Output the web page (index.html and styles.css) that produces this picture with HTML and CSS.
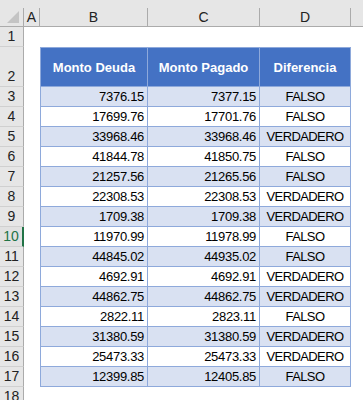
FILE: index.html
```html
<!DOCTYPE html>
<html>
<head>
<meta charset="utf-8">
<link rel="stylesheet" href="styles.css">
</head>
<body>
<div class="sheet">
  <div class="row colheads">
    <div class="ch corner"><span class="tri"></span></div>
    <div class="ch">A</div>
    <div class="ch">B</div>
    <div class="ch">C</div>
    <div class="ch">D</div>
    <div class="ch last"></div>
  </div>
  <div class="row r1"><div class="rh">1</div><div></div><div></div><div></div><div></div><div></div></div>
  <div class="row r2"><div class="rh">2</div><div></div><div class="th first">Monto Deuda</div><div class="th">Monto Pagado</div><div class="th">Diferencia</div><div></div></div>
  <div class="row band"><div class="rh">3</div><div></div><div class="td num first">7376.15</div><div class="td num">7377.15</div><div class="td txt">FALSO</div><div></div></div>
  <div class="row"><div class="rh">4</div><div></div><div class="td num first">17699.76</div><div class="td num">17701.76</div><div class="td txt">FALSO</div><div></div></div>
  <div class="row band"><div class="rh">5</div><div></div><div class="td num first">33968.46</div><div class="td num">33968.46</div><div class="td txt">VERDADERO</div><div></div></div>
  <div class="row"><div class="rh">6</div><div></div><div class="td num first">41844.78</div><div class="td num">41850.75</div><div class="td txt">FALSO</div><div></div></div>
  <div class="row band"><div class="rh">7</div><div></div><div class="td num first">21257.56</div><div class="td num">21265.56</div><div class="td txt">FALSO</div><div></div></div>
  <div class="row"><div class="rh">8</div><div></div><div class="td num first">22308.53</div><div class="td num">22308.53</div><div class="td txt">VERDADERO</div><div></div></div>
  <div class="row band"><div class="rh">9</div><div></div><div class="td num first">1709.38</div><div class="td num">1709.38</div><div class="td txt">VERDADERO</div><div></div></div>
  <div class="row"><div class="rh active">10</div><div></div><div class="td num first">11970.99</div><div class="td num">11978.99</div><div class="td txt">FALSO</div><div></div></div>
  <div class="row band"><div class="rh">11</div><div></div><div class="td num first">44845.02</div><div class="td num">44935.02</div><div class="td txt">FALSO</div><div></div></div>
  <div class="row"><div class="rh">12</div><div></div><div class="td num first">4692.91</div><div class="td num">4692.91</div><div class="td txt">VERDADERO</div><div></div></div>
  <div class="row band"><div class="rh">13</div><div></div><div class="td num first">44862.75</div><div class="td num">44862.75</div><div class="td txt">VERDADERO</div><div></div></div>
  <div class="row"><div class="rh">14</div><div></div><div class="td num first">2822.11</div><div class="td num">2823.11</div><div class="td txt">FALSO</div><div></div></div>
  <div class="row band"><div class="rh">15</div><div></div><div class="td num first">31380.59</div><div class="td num">31380.59</div><div class="td txt">VERDADERO</div><div></div></div>
  <div class="row"><div class="rh">16</div><div></div><div class="td num first">25473.33</div><div class="td num">25473.33</div><div class="td txt">VERDADERO</div><div></div></div>
  <div class="row band"><div class="rh">17</div><div></div><div class="td num first">12399.85</div><div class="td num">12405.85</div><div class="td txt">FALSO</div><div></div></div>
  <div class="row"><div class="rh">18</div><div></div><div></div><div></div><div></div><div></div></div>
</div>
</body>
</html>
```
FILE: styles.css
```css
html, body {
  margin: 0;
  padding: 0;
  background: #ffffff;
  overflow: hidden;
}
.sheet {
  width: 363px;
  height: 400px;
  overflow: hidden;
  font-family: "Liberation Sans", Arial, sans-serif;
  font-size: 13px;
  color: #000;
}
.row {
  display: grid;
  grid-template-columns: 24px 16px 108px 112px 91px 1fr;
  height: 20px;
}
.row > div {
  box-sizing: border-box;
  min-width: 0;
}
.colheads {
  height: 27px;
  background: #e6e6e6;
  padding-top: 8px;
  box-sizing: border-box;
  border-bottom: 1px solid #ababab;
}
.ch {
  border-right: 1px solid #ababab;
  display: flex;
  align-items: center;
  justify-content: center;
  color: #222;
  font-size: 14px;
  line-height: 18px;
}
.ch.last { border-right: none; }
.corner {
  position: relative;
}
.tri {
  position: absolute;
  right: 4px;
  bottom: 3px;
  width: 0;
  height: 0;
  border-left: 12px solid transparent;
  border-bottom: 12px solid #c4c4c4;
}
.r2 { height: 40px; }
.rh {
  background: #e6e6e6;
  border-right: 1px solid #ababab;
  border-bottom: 1px solid #d0d0d0;
  color: #222;
  display: flex;
  align-items: flex-end;
  justify-content: center;
  line-height: 19px;
  font-size: 14px;
}
.rh.active {
  color: #217346;
  border-right: 2px solid #217346;
  background: #e1e1e1;
}
.th {
  background: #4472c4;
  color: #ffffff;
  font-weight: bold;
  display: flex;
  align-items: center;
  justify-content: center;
  border-top: 1px solid #8ea9db;
  border-right: 1px solid #8ea9db;
  border-bottom: 1px solid #8ea9db;
}
.first { border-left: 1px solid #8ea9db; }
.td {
  border-right: 1px solid #8ea9db;
  border-bottom: 1px solid #8ea9db;
  display: flex;
  align-items: flex-end;
  line-height: 18px;
  white-space: nowrap;
  letter-spacing: -0.3px;
}
.band .td { background: #d9e1f2; }
.num {
  justify-content: flex-end;
  padding-right: 3px;
}
.txt {
  justify-content: center;
  letter-spacing: -0.6px;
}
```
